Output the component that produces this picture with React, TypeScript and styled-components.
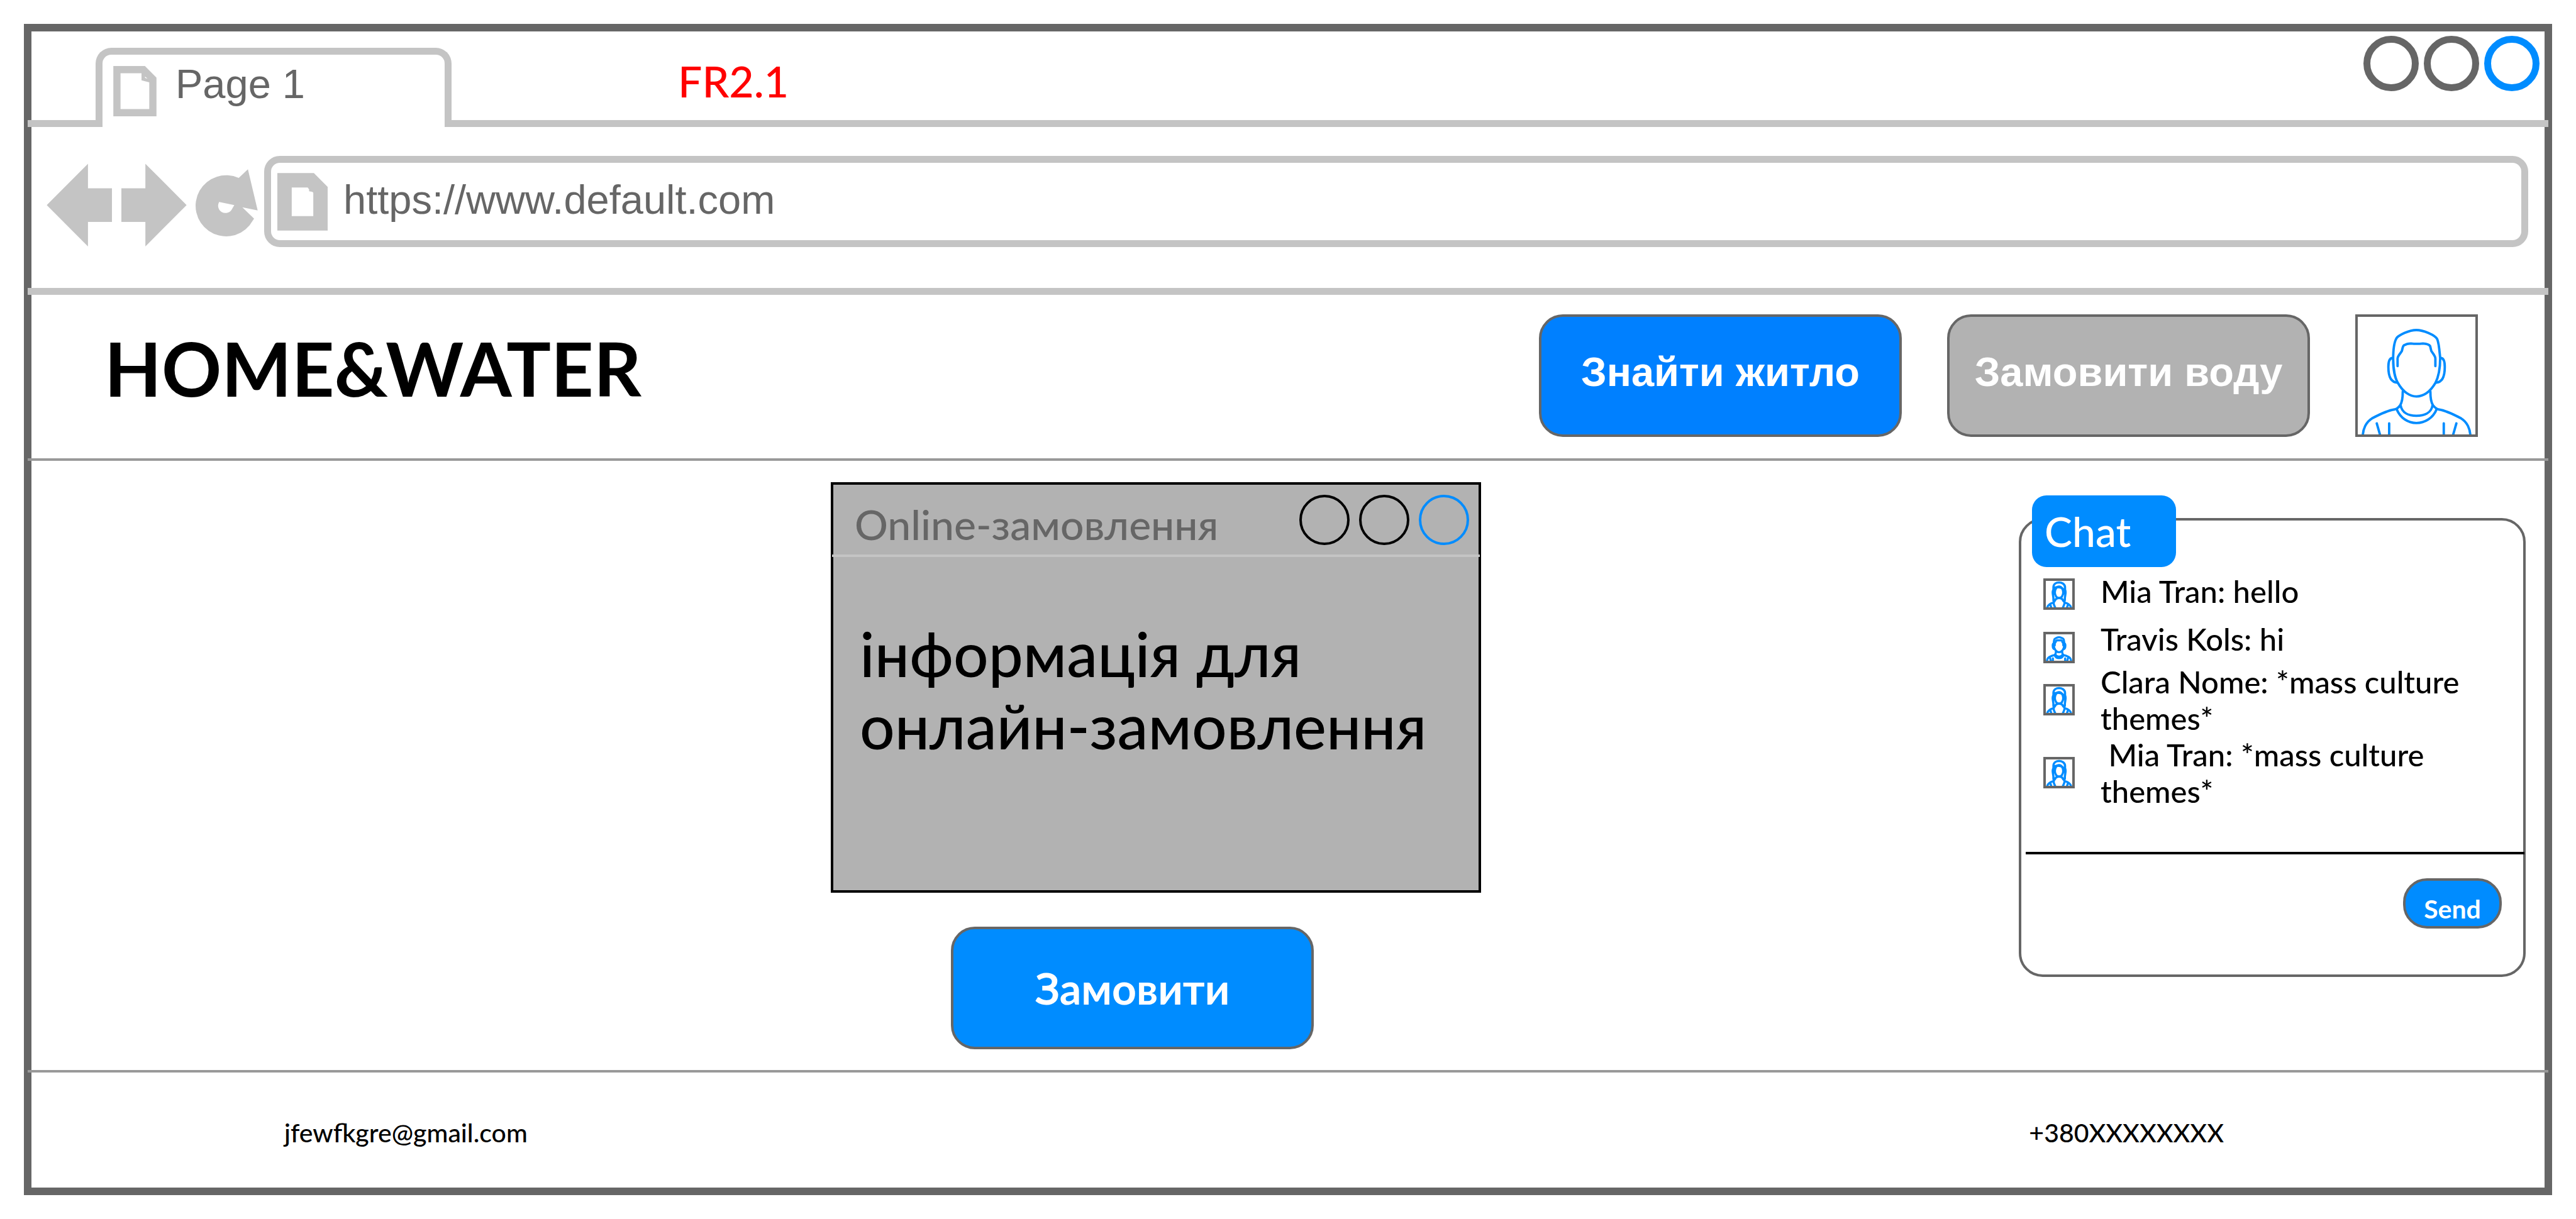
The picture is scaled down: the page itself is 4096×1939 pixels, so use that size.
import React from "react";
import styled, { createGlobalStyle } from "styled-components";

const colors = {
  frame: "#666666",
  chrome: "#c4c4c4",
  rule: "#999999",
  panel: "#b2b2b2",
  blue: "#008cff",
  strongBlue: "#0080ff",
};

const hand = `Lato, "Open Sans", sans-serif`;
const ui = `"Liberation Sans", Arial, sans-serif`;

const GlobalStyle = createGlobalStyle`
  *, *::before, *::after { box-sizing: border-box; }
  body { margin: 0; background: #fff; color: #000; font-family: ${hand}; font-weight: 500; }
  button { padding: 0; margin: 0; border: 0; background: none; font: inherit; cursor: pointer; }
  svg { display: block; }
`;

const Page = styled.div`
  min-height: 100vh;
  padding: 38px;
  display: flex;
`;

const Frame = styled.div`
  flex: 1;
  display: flex;
  flex-direction: column;
  border: 12px solid ${colors.frame};
`;

/* Browser chrome */

const TabStrip = styled.div`
  display: flex;
  height: 152px;
  margin: 0 -6px;
`;

const StripStart = styled.div`
  width: 108px;
  border-bottom: 11px solid ${colors.chrome};
`;

const Tab = styled.div`
  width: 566px;
  margin-top: 26px;
  padding-left: 17px;
  display: flex;
  align-items: center;
  gap: 30px;
  border: 11px solid ${colors.chrome};
  border-bottom: 0;
  border-radius: 25px 25px 0 0;
`;

const TabTitle = styled.span`
  padding-bottom: 22px;
  font: 65px/76px ${ui};
  color: ${colors.frame};
`;

const StripRest = styled.div`
  flex: 1;
  display: flex;
  justify-content: space-between;
  align-items: flex-start;
  padding: 7px 14px 0 360px;
  border-bottom: 11px solid ${colors.chrome};
`;

const Tag = styled.span`
  padding-top: 32px;
  font-size: 68px;
  line-height: 80px;
  color: #ff0000;
`;

const WindowButtons = styled.div<{ $gap: number }>`
  display: flex;
  gap: ${(p) => p.$gap}px;
`;

const WindowButton = styled.button<{ $size: number; $stroke: number; $color: string }>`
  width: ${(p) => p.$size}px;
  height: ${(p) => p.$size}px;
  border: ${(p) => p.$stroke}px solid ${(p) => p.$color};
  border-radius: 50%;
`;

const Toolbar = styled.div`
  display: flex;
  gap: 10px;
  margin: 0 -6px;
  padding: 46px 32px 65px 30px;
  border-bottom: 11px solid ${colors.chrome};
`;

const NavButton = styled.button`
  height: 145px;
  color: ${colors.chrome};

  svg { height: 145px; fill: currentColor; }
`;

const AddressBar = styled.label`
  flex: 1;
  height: 145px;
  padding-left: 10px;
  display: flex;
  align-items: center;
  gap: 25px;
  border: 11px solid ${colors.chrome};
  border-radius: 25px;
`;

const AddressInput = styled.input`
  flex: 1;
  min-width: 0;
  padding: 0 0 6px;
  border: 0;
  outline: 0;
  background: none;
  font: 65px/76px ${ui};
  color: ${colors.frame};
`;

/* Site header */

const Header = styled.header`
  display: flex;
  align-items: center;
  gap: 72px;
  margin: 0 -6px;
  padding: 31px 112px 34px 122px;
  border-bottom: 4px solid ${colors.rule};
`;

const Logo = styled.h1`
  flex: 1;
  margin: 0;
  padding-bottom: 24px;
  font-size: 118px;
  line-height: 140px;
  font-weight: 700;
`;

const ActionButton = styled.button<{ $fill: string }>`
  width: 577px;
  height: 195px;
  padding-bottom: 12px;
  border: 4px solid ${colors.frame};
  border-radius: 38px;
  background: ${(p) => p.$fill};
  color: #fff;
  font: 700 65px/80px ${ui};
  white-space: nowrap;
`;

const OrderButton = styled(ActionButton)`
  padding-bottom: 0;
  font: 700 68px/80px ${hand};
`;

const ProfileButton = styled.button`
  width: 195px;
  height: 195px;
  border: 4px solid ${colors.frame};
`;

/* Content */

const Main = styled.main`
  flex: 1;
  display: grid;
  grid-template-columns: 1271fr 1034px 855fr 806px 30px;
  align-items: start;
`;

const OrderColumn = styled.section`
  grid-column: 2;
  display: flex;
  flex-direction: column;
  align-items: flex-start;
  gap: 54px;
  padding-top: 34px;
`;

const OrderWindow = styled.div`
  width: 100%;
  min-height: 653px;
  border: 4px solid #000;
  background: ${colors.panel};
`;

const OrderTitleBar = styled.div`
  display: flex;
  align-items: center;
  justify-content: space-between;
  height: 115px;
  margin: 0 -2px;
  padding: 0 17px 0 36px;
  border-bottom: 4px solid ${colors.chrome};
`;

const OrderTitle = styled.h2`
  margin: 0;
  padding-top: 14px;
  font-size: 66px;
  line-height: 80px;
  font-weight: 500;
  color: ${colors.frame};
`;

const OrderText = styled.p`
  margin: 0;
  padding: 96px 32px 32px 42px;
  font-size: 98px;
  line-height: 115px;
`;

const OrderAction = styled.div`
  padding-left: 191px;
`;

const Chat = styled.section`
  grid-column: 4;
  position: relative;
  min-height: 730px;
  margin-top: 91px;
  display: flex;
  flex-direction: column;
  border: 4px solid ${colors.frame};
  border-radius: 38px;
`;

const ChatLabel = styled.h2`
  position: absolute;
  left: 17px;
  top: -40px;
  width: 229px;
  height: 114px;
  margin: 0;
  padding-left: 20px;
  border-radius: 23px;
  background: ${colors.blue};
  color: #fff;
  font-size: 66px;
  line-height: 114px;
  font-weight: 500;
`;

const MessageList = styled.ul`
  flex: 1;
  margin: 0;
  padding: 83px 24px 0 35px;
  list-style: none;
`;

const Message = styled.li<{ $gap: number }>`
  display: flex;
  gap: 41px;
  margin-bottom: ${(p) => p.$gap}px;
  font-size: 49px;
  line-height: 58px;
  white-space: pre-wrap;
`;

const MessageAvatar = styled.span<{ $drop: number }>`
  flex: none;
  width: 50px;
  height: 50px;
  margin-top: ${(p) => p.$drop}px;
  border: 4px solid ${colors.frame};
`;

const Composer = styled.form`
  display: flex;
  align-items: flex-start;
  height: 195px;
  margin: 0 -2px 0 7px;
  padding: 38px 36px 0 24px;
  border-top: 4px solid #000;
`;

const ComposerInput = styled.input`
  flex: 1;
  min-width: 0;
  height: 80px;
  border: 0;
  outline: 0;
  background: none;
  font: 49px/58px ${hand};
`;

const SendButton = styled.button`
  width: 157px;
  height: 80px;
  padding-top: 18px;
  border: 4px solid ${colors.frame};
  border-radius: 38px;
  background: ${colors.blue};
  color: #fff;
  font: 700 41px/50px ${hand};
`;

const Footer = styled.footer`
  display: flex;
  align-items: center;
  justify-content: space-between;
  height: 187px;
  margin: 0 -6px;
  padding: 8px 516px 0 408px;
  border-top: 4px solid ${colors.rule};
`;

const FooterLink = styled.a`
  color: #000;
  text-decoration: none;
  font-size: 41px;
  line-height: 50px;
`;

/* Drawings */

const ManPortrait = ({ stroke }: { stroke: number }) => (
  <svg width="100%" height="100%" viewBox="264 84 588 588" fill="none" stroke={colors.blue} strokeWidth={stroke} strokeLinecap="round" strokeLinejoin="round" aria-hidden="true">
    <path d="M557 150C520 150 470 175 458 190C443 215 441 275 441 295C441 350 452 395 465 415C490 460 525 482 557 482C590 482 625 460 652 415C665 390 676 345 676 290C672 250 670 215 661 195C650 175 592 150 557 150Z" />
    <path d="M463 330V292C463 280 481 262 484 256C487 248 488 232 494 227C505 220 520 217 530 217C545 219 572 219 590 217C605 218 620 222 625 229C629 238 629 250 633 257C640 267 652 282 652 292V330" />
    <path d="M438 290C422 290 417 312 417 335C417 380 428 412 462 413M679 290C694 290 699 312 699 335C699 380 687 412 655 413" />
    <path d="M489 457C489 490 487 510 476 526C470 536 460 544 448 547C420 551 380 568 335 592C305 610 290 645 289 680M627 457C627 490 629 510 640 526C648 536 656 544 668 547C696 551 736 568 781 592C811 610 826 645 827 680" />
    <path d="M478 526C485 565 520 579 557 579C596 579 632 565 638 526M459 547C477 590 515 615 557 615C600 615 640 590 658 547" />
    <path d="M359 617L377 680M421 617V680M694 617V680M757 617L739 680" />
  </svg>
);

const WomanPortrait = () => (
  <svg width="100%" height="100%" viewBox="36 36 132 132" fill="none" stroke={colors.blue} strokeWidth="11" strokeLinecap="round" strokeLinejoin="round" aria-hidden="true">
    <path d="M74 100V68C74 50 90 44 102 44S132 50 132 68V100" />
    <path d="M76 74C82 66 100 66 112 70C124 74 130 84 130 90" />
    <ellipse cx="102" cy="93" rx="21" ry="29" />
    <path d="M72 84C66 98 76 112 74 132C74 140 78 140 82 134C86 124 92 122 102 122C112 122 118 124 122 134C126 140 130 140 131 132C129 112 139 98 133 84" />
    <path d="M43 170C46 154 60 148 76 144M162 170C159 154 145 148 129 144" />
    <path d="M58 154L64 172M147 154L141 172M74 146C76 156 80 164 84 172M130 146C128 156 124 164 120 172" />
  </svg>
);

const circleTones = (base: string) => [
  { label: "Minimize", color: base },
  { label: "Maximize", color: base },
  { label: "Close", color: colors.blue },
];

const messages = [
  { woman: true, text: "Mia Tran: hello", gap: 17, drop: 9 },
  { woman: false, text: "Travis Kols: hi", gap: 0, drop: 18 },
  { woman: true, text: "Clara Nome: *mass culture themes*", gap: 0, drop: 33 },
  { woman: true, text: " Mia Tran: *mass culture themes*", gap: 0, drop: 33 },
];

export default function App() {
  return (
    <Page>
      <GlobalStyle />
      <Frame>
        <TabStrip>
          <StripStart />
          <Tab>
            <svg width="69" height="80" viewBox="188 108 72 84" fill={colors.chrome} fillRule="evenodd" aria-hidden="true">
              <path d="M188 108H240.7L260 127.5V192H188ZM200 120H235V132L248 135.3V180H200ZM241 125.5V128L245 129Z" />
            </svg>
            <TabTitle>Page 1</TabTitle>
          </Tab>
          <StripRest>
            <Tag>FR2.1</Tag>
            <WindowButtons $gap={8}>
              {circleTones(colors.frame).map((c) => (
                <WindowButton key={c.label} type="button" aria-label={c.label} $size={88} $stroke={11} $color={c.color} />
              ))}
            </WindowButtons>
          </StripRest>
        </TabStrip>

        <Toolbar>
          <NavButton type="button" aria-label="Back">
            <svg width="106" viewBox="77 260 111 152">
              <path d="M77.3 342L146 273V314H186V370H146V411Z" />
            </svg>
          </NavButton>
          <NavButton type="button" aria-label="Forward">
            <svg width="110" viewBox="199 260 115 152">
              <path d="M310.7 342L242 273V314H202V370H242V411Z" />
            </svg>
          </NavButton>
          <NavButton type="button" aria-label="Reload">
            <svg width="100" viewBox="324.6 260 105 152">
              <path fillRule="evenodd" d="M397.7 296.7A51 51 0 1 0 415.7 376L423.3 364.7L403.7 345.7L429.3 351L413 282.3ZM365 336.7L390.3 342L386 349.3A12 12 0 0 1 365 336.7Z" />
            </svg>
          </NavButton>
          <AddressBar>
            <svg width="80" height="92" viewBox="462 290 84 96" fill={colors.chrome} fillRule="evenodd" aria-hidden="true">
              <path d="M462 290H523L546 313V386H462ZM486 314H512.7L515 317.3V320.5L520 321.3L522 322.7V362H486Z" />
            </svg>
            <AddressInput type="text" aria-label="Address" defaultValue="https://www.default.com" />
          </AddressBar>
        </Toolbar>

        <Header>
          <Logo>HOME&amp;WATER</Logo>
          <ActionButton type="button" $fill={colors.strongBlue}>Знайти житло</ActionButton>
          <ActionButton type="button" $fill={colors.panel}>Замовити воду</ActionButton>
          <ProfileButton type="button" aria-label="Profile">
            <ManPortrait stroke={12} />
          </ProfileButton>
        </Header>

        <Main>
          <OrderColumn>
            <OrderWindow>
              <OrderTitleBar>
                <OrderTitle>Online-замовлення</OrderTitle>
                <WindowButtons $gap={15}>
                  {circleTones("#000").map((c) => (
                    <WindowButton key={c.label} type="button" aria-label={c.label} $size={80} $stroke={4} $color={c.color} />
                  ))}
                </WindowButtons>
              </OrderTitleBar>
              <OrderText>інформація для онлайн-замовлення</OrderText>
            </OrderWindow>
            <OrderAction>
              <OrderButton type="button" $fill={colors.blue}>Замовити</OrderButton>
            </OrderAction>
          </OrderColumn>

          <Chat>
            <ChatLabel>Chat</ChatLabel>
            <MessageList>
              {messages.map((m) => (
                <Message key={m.text} $gap={m.gap}>
                  <MessageAvatar $drop={m.drop}>
                    {m.woman ? <WomanPortrait /> : <ManPortrait stroke={46} />}
                  </MessageAvatar>
                  <span>{m.text}</span>
                </Message>
              ))}
            </MessageList>
            <Composer onSubmit={(e) => e.preventDefault()}>
              <ComposerInput type="text" aria-label="Message" />
              <SendButton type="submit">Send</SendButton>
            </Composer>
          </Chat>
        </Main>

        <Footer>
          <FooterLink href="mailto:jfewfkgre@gmail.com">jfewfkgre@gmail.com</FooterLink>
          <FooterLink href="tel:+380">+380XXXXXXXX</FooterLink>
        </Footer>
      </Frame>
    </Page>
  );
}
